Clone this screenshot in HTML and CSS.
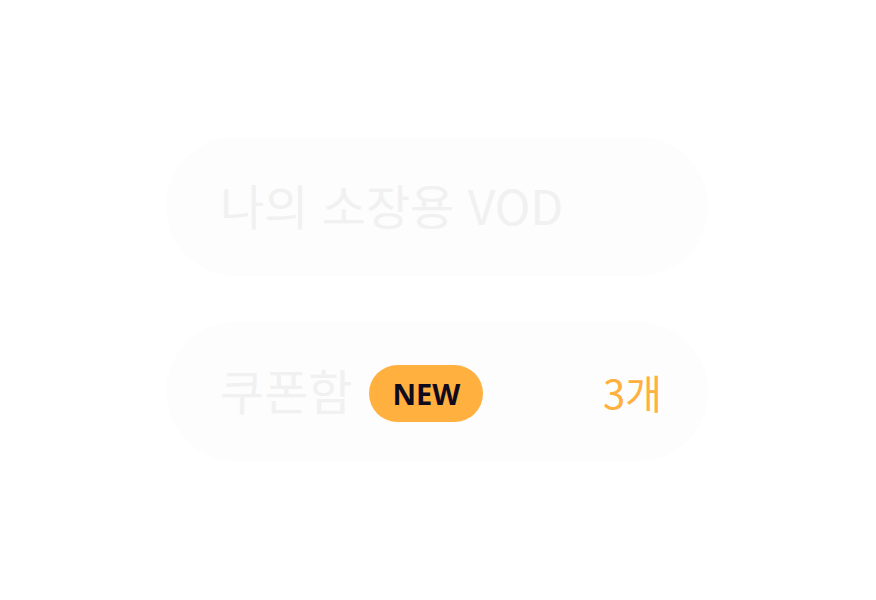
FILE: index.html
```html
<!DOCTYPE html>
<html lang="ko">
<head>
<meta charset="utf-8">
<link rel="stylesheet" href="styles.css">
</head>
<body>
<main class="menu">
  <section class="card">
    <span class="title">나의 소장용 VOD</span>
  </section>
  <section class="card">
    <span class="title">쿠폰함</span>
    <span class="badge">NEW</span>
    <span class="count">3개</span>
  </section>
</main>
</body>
</html>
```
FILE: styles.css
```css
html, body {
  margin: 0;
  padding: 0;
  background: #ffffff;
}
body {
  width: 876px;
  height: 600px;
  font-family: "Noto Sans CJK KR", "Noto Sans", sans-serif;
}
.menu {
  display: flex;
  flex-direction: column;
  gap: 46px;
  padding: 137px 0 0 166px;
  width: 542px;
}
.card {
  height: 139px;
  border-radius: 70px;
  background: #fdfdfd;
  display: flex;
  align-items: center;
  padding: 0 46px 0 54px;
}
.title {
  font-size: 48px;
  font-weight: 400;
  color: #f1f1f1;
  line-height: 1;
  padding-bottom: 6px;
}
.badge {
  margin-left: 17px;
  margin-top: 4px;
  height: 57px;
  width: 114px;
  border-radius: 29px;
  background: #ffb03f;
  color: #0f0a1e;
  font-family: "Open Sans", sans-serif;
  font-weight: 700;
  font-size: 29px;
  display: flex;
  align-items: center;
  justify-content: center;
}
.count {
  margin-left: auto;
  font-size: 40px;
  color: #ffb03f;
  line-height: 1;
}
```
